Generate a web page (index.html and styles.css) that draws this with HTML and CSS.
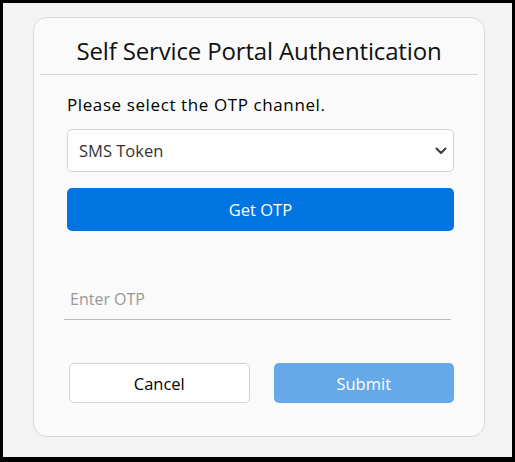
FILE: index.html
```html
<!DOCTYPE html>
<html>
<head>
<meta charset="utf-8">
<link rel="stylesheet" href="styles.css">
</head>
<body>
<div class="frame">
  <div class="card">
    <div class="card-header">
      <h1 class="title">Self Service Portal Authentication</h1>
    </div>
    <div class="card-body">
      <p class="label">Please select the OTP channel.</p>
      <div class="select-wrap">
        <select class="select">
          <option>SMS Token</option>
          <option>Email Token</option>
        </select>
        <svg class="chevron" width="12" height="8" viewBox="0 0 12 8"><path d="M1.5 1.5 L6 6 L10.5 1.5" fill="none" stroke="#343a40" stroke-width="2" stroke-linecap="round" stroke-linejoin="round"/></svg>
      </div>
      <button class="btn btn-primary">Get OTP</button>
      <input class="otp" type="text" placeholder="Enter OTP">
      <div class="actions">
        <button class="btn btn-cancel">Cancel</button>
        <button class="btn btn-submit">Submit</button>
      </div>
    </div>
  </div>
</div>
</body>
</html>
```
FILE: styles.css
```css
* { box-sizing: border-box; }
html, body { margin: 0; padding: 0; }
body {
  background: #000;
  font-family: "Open Sans", "Noto Sans", sans-serif;
  color: #000;
}
.frame {
  margin: 3px 3px 5px 3px;
  height: 454px;
  background: #f3f3f3;
  padding: 14px 0 0 30px;
}
.card {
  width: 452px;
  height: 420px;
  background: #fafafa;
  border: 1px solid #d9d9d9;
  border-radius: 14px;
  padding: 0 6px;
}
.card-header {
  height: 57px;
  border-bottom: 1px solid #d6d6d6;
  display: flex;
  align-items: center;
  justify-content: center;
  padding-top: 10px;
}
.title {
  margin: 0;
  font-size: 24px;
  line-height: 30px;
  font-weight: 400;
  color: #111;
  letter-spacing: -0.15px;
}
.card-body {
  padding: 0 0 0 27px;
  width: 414px;
}
.label {
  margin: 19px 0 0 0;
  font-size: 17px;
  line-height: 22px;
  letter-spacing: 0.6px;
}
.select-wrap {
  position: relative;
  margin-top: 13px;
  width: 387px;
  height: 43px;
}
.select {
  appearance: none;
  -webkit-appearance: none;
  width: 100%;
  height: 100%;
  border: 1px solid #ced4da;
  border-radius: 5px;
  background: #fff;
  font-family: inherit;
  font-size: 16.5px;
  color: #333;
  padding: 0 0 0 11px;
}
.chevron {
  position: absolute;
  right: 7px;
  top: 18px;
}
.btn {
  display: flex;
  align-items: center;
  justify-content: center;
  font-family: inherit;
  font-size: 16.5px;
  border-radius: 5px;
  cursor: pointer;
}
.btn-primary {
  margin-top: 16px;
  width: 387px;
  height: 43px;
  background: #0074e0;
  color: #fff;
  border: none;
}
.otp {
  display: block;
  margin: 45px 0 0 -3px;
  width: 387px;
  height: 44px;
  border: none;
  border-bottom: 1px solid #bdbdbd;
  background: transparent;
  font-family: inherit;
  font-size: 16px;
  padding: 2px 0 0 6px;
  outline: none;
}
.otp::placeholder { color: #999; }
.actions {
  margin-top: 43px;
  padding-left: 2px;
  display: flex;
  gap: 24px;
}
.btn-cancel {
  width: 181px;
  height: 40px;
  background: #fff;
  color: #000;
  border: 1px solid #d4d4d4;
}
.btn-submit {
  width: 181px;
  height: 40px;
  background: #65a9e8;
  color: #fff;
  border: none;
}
```
